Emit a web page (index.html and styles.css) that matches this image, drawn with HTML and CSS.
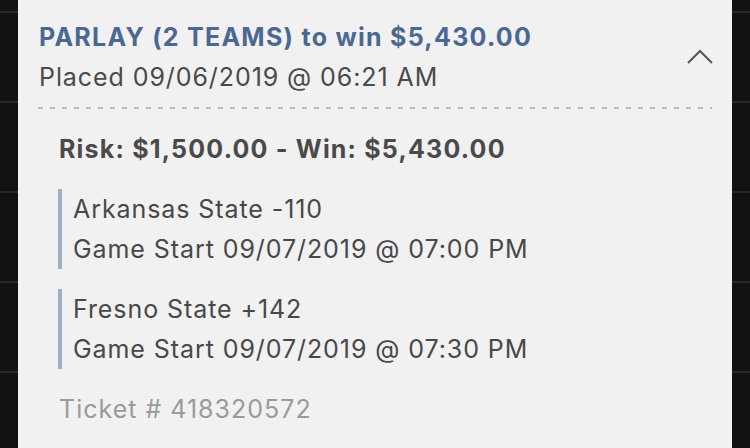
FILE: index.html
```html
<!DOCTYPE html>
<html lang="en">
<head>
<meta charset="utf-8">
<title>Parlay</title>
<link rel="stylesheet" href="styles.css">
</head>
<body>
<div class="card">
  <div class="head">
    <div class="head-text">
      <div class="title">PARLAY (2 TEAMS) to win $5,430.00</div>
      <div class="placed">Placed 09/06/2019 @ 06:21 AM</div>
    </div>
    <svg class="chev" width="26" height="15" viewBox="0 0 26 15"><path d="M1 14 L13 2 L25 14" fill="none" stroke="#555" stroke-width="2"/></svg>
  </div>
  <div class="dash"></div>
  <div class="body">
    <div class="risk">Risk: $1,500.00 - Win: $5,430.00</div>
    <div class="leg">
      <div>Arkansas State -110</div>
      <div>Game Start 09/07/2019 @ 07:00 PM</div>
    </div>
    <div class="leg">
      <div>Fresno State +142</div>
      <div>Game Start 09/07/2019 @ 07:30 PM</div>
    </div>
    <div class="ticket">Ticket # 418320572</div>
  </div>
</div>
</body>
</html>
```
FILE: styles.css
```css
html, body {
  margin: 0;
  padding: 0;
}
body {
  width: 750px;
  height: 448px;
  overflow: hidden;
  background: repeating-linear-gradient(180deg, #111 0 11px, #282828 11px 13px, #111 13px 90px);
  font-family: Inter, "Noto Sans", "Liberation Sans", sans-serif;
  font-size: 25px;
  line-height: 40px;
  letter-spacing: 0.92px;
  color: #484848;
}
.card {
  margin: 0 18px;
  height: 448px;
  background: #f1f1f1;
  padding: 17px 20px 0 20px;
  box-sizing: border-box;
}
.head {
  display: flex;
  align-items: center;
  justify-content: space-between;
  padding-left: 1px;
}
.title {
  font-weight: 700;
  letter-spacing: 1.27px;
  color: #4a6891;
}
.placed {
  color: #4a4a4a;
}
.chev {
  margin-right: -1px;
  margin-top: -2px;
}
.dash {
  height: 2px;
  margin-top: 10px;
  background: repeating-linear-gradient(90deg, #bababa 0 5px, transparent 5px 12px);
}
.body {
  padding: 20px 0 0 20px;
  display: flex;
  flex-direction: column;
  gap: 20px;
}
.risk {
  font-weight: 700;
  letter-spacing: 1.2px;
  color: #4a4a4a;
  padding-left: 1px;
}
.leg {
  border-left: 4px solid #a1b0c6;
  padding-left: 11px;
}
.ticket {
  color: #9a9a9a;
  letter-spacing: 1px;
  padding-left: 1px;
}
```
